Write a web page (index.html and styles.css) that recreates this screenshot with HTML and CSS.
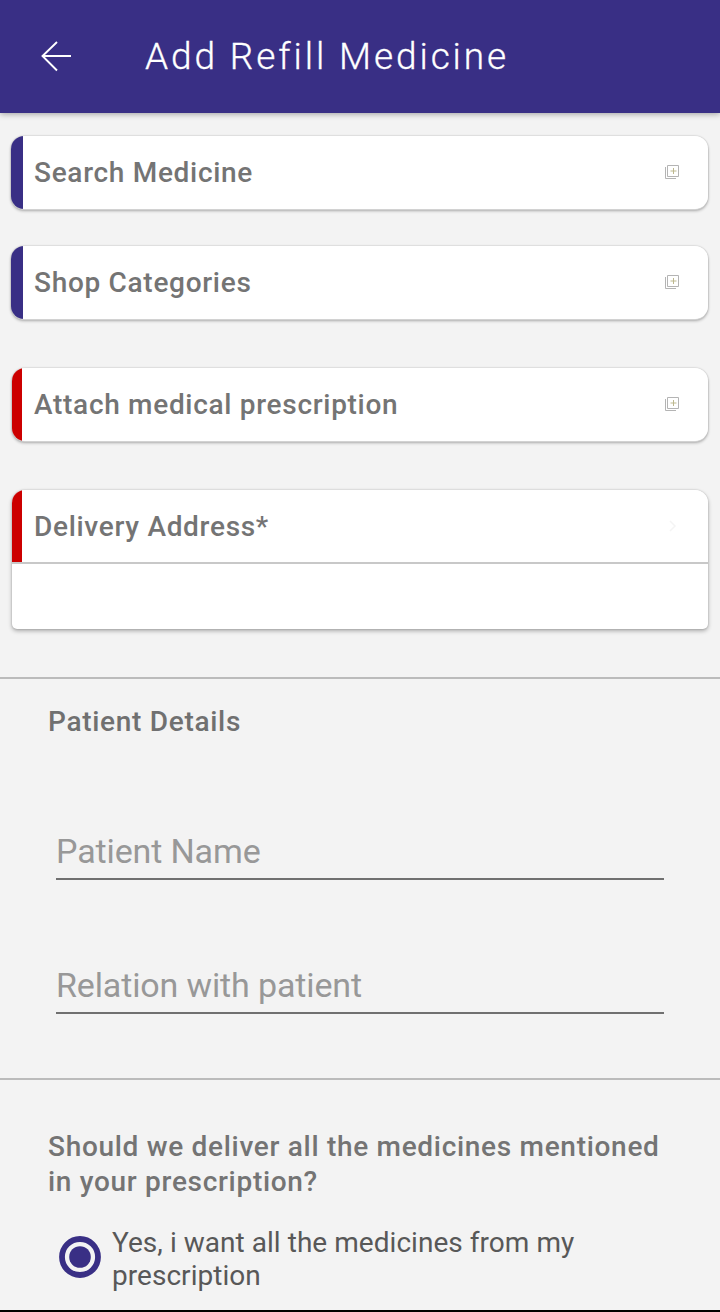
FILE: index.html
```html
<!DOCTYPE html>
<html lang="en">
<head>
    <meta charset="UTF-8">
    <meta name="viewport" content="width=device-width, initial-scale=1.0">
    <title>Add Refill Medicine</title>
    <link rel="stylesheet" href="styles.css">
</head>
<body>
    <header>
        <a href="#" class="back-btn" aria-label="Back">
            <svg width="32" height="32" viewBox="0 0 32 32">
                <path d="M17 1L2.5 15L17 29.5M3 15H31" fill="none" stroke="#fff" stroke-width="1.9"/>
            </svg>
        </a>
        <h1>Add Refill Medicine</h1>
    </header>

    <main>
        <div class="card blue search">
            <span class="card-title">Search Medicine</span>
            <svg class="add-icon" width="16" height="16" viewBox="0 0 16 16">
                <path d="M3.5 1.5H14.5V12.5H3.5ZM1.5 3V14.5H12" fill="none" stroke="#b4b4b4"/>
                <path d="M9.5 4V10M6.5 7H12.5" fill="none" stroke="#bdb88e"/>
            </svg>
        </div>

        <div class="card blue shop">
            <span class="card-title">Shop Categories</span>
            <svg class="add-icon" width="16" height="16" viewBox="0 0 16 16">
                <path d="M3.5 1.5H14.5V12.5H3.5ZM1.5 3V14.5H12" fill="none" stroke="#b4b4b4"/>
                <path d="M9.5 4V10M6.5 7H12.5" fill="none" stroke="#bdb88e"/>
            </svg>
        </div>

        <div class="card red attach">
            <span class="card-title">Attach medical prescription</span>
            <svg class="add-icon" width="16" height="16" viewBox="0 0 16 16">
                <path d="M3.5 1.5H14.5V12.5H3.5ZM1.5 3V14.5H12" fill="none" stroke="#b4b4b4"/>
                <path d="M9.5 4V10M6.5 7H12.5" fill="none" stroke="#bdb88e"/>
            </svg>
        </div>

        <div class="address">
            <div class="card red address-head">
                <span class="card-title">Delivery Address*</span>
                <svg width="16" height="16" viewBox="0 0 16 16">
                    <path d="M6 3L11 8L6 13" fill="none" stroke="#f4f4f4" stroke-width="1.5"/>
                </svg>
            </div>
            <div class="address-body"></div>
        </div>

        <section class="patient">
            <h2>Patient Details</h2>
            <input type="text" class="name" placeholder="Patient Name">
            <input type="text" class="relation" placeholder="Relation with patient">
        </section>

        <section class="delivery">
            <h3>Should we deliver all the medicines mentioned <br>in your prescription?</h3>
            <label class="option">
                <svg class="radio" width="42" height="42" viewBox="0 0 42 42">
                    <circle cx="21" cy="21" r="18" fill="none" stroke="#392f85" stroke-width="5.8"/>
                    <circle cx="21" cy="21" r="10.8" fill="#392f85"/>
                </svg>
                <span class="option-text">Yes, i want all the medicines from my <br>prescription</span>
            </label>
        </section>
    </main>
    <div class="bottom-bar"></div>
</body>
</html>
```

FILE: styles.css
```css
* {
    margin: 0;
    padding: 0;
    box-sizing: border-box;
}

body {
    font-family: Roboto, sans-serif;
    background-color: #f3f3f3;
    height: 1312px;
    display: flex;
    flex-direction: column;
    overflow: hidden;
}

header {
    background-color: #392f85;
    height: 113px;
    flex-shrink: 0;
    padding-left: 40px;
    display: flex;
    align-items: center;
    box-shadow: 0 1px 6px rgba(0, 0, 0, 0.35);
}

.back-btn {
    width: 32px;
    height: 32px;
    margin-right: 73px;
}

h1 {
    font-size: 37px;
    font-weight: 300;
    letter-spacing: 2.9px;
    color: white;
    white-space: nowrap;
    -webkit-text-stroke: 0.3px white;
}

main {
    flex: 1;
}

.card {
    height: 73px;
    margin: 0 12px;
    padding: 0 28px 0 12px;
    display: flex;
    align-items: center;
    justify-content: space-between;
    background-color: white;
    border-radius: 13px;
    box-shadow: 0 1px 0 #d2d2d2, 0 2px 3px rgba(0, 0, 0, 0.3), 0 0 2px rgba(0, 0, 0, 0.25);
}

.card.blue {
    margin-left: 11px;
    background: linear-gradient(to right, #392f85 12px, white 12px);
    padding-left: 23px;
}

.card.red {
    background: linear-gradient(to right, #cc0000 10px, white 10px);
    padding-left: 22px;
}

.search {
    margin-top: 23px;
}

.shop {
    margin-top: 37px;
}

.attach {
    margin-top: 49px;
}

.card-title, h2, h3 {
    font-size: 28px;
    font-weight: 500;
    letter-spacing: 0.7px;
    color: #747474;
}

.add-icon {
    margin-bottom: 2px;
}

.address {
    margin: 49px 12px 0;
    background-color: white;
    border-radius: 13px 13px 5px 5px;
    box-shadow: 0 2px 4px rgba(0, 0, 0, 0.3), 0 0 2px rgba(0, 0, 0, 0.2);
}

.address-head {
    height: 72px;
    margin: 0;
    border-radius: 13px 13px 0 0;
    box-shadow: none;
}

.address-body {
    height: 67px;
    border-top: 2px solid #c8c8c8;
}

.patient {
    margin-top: 48px;
    height: 401px;
    border-top: 2px solid #bbb;
    padding: 26px 56px 0;
}

h2 {
    margin-left: -8px;
    line-height: 34px;
    color: #707070;
}

input {
    display: block;
    width: 100%;
    height: 60px;
    padding-top: 4px;
    border: none;
    border-bottom: 2px solid #707070;
    background: transparent;
    font-family: Roboto, sans-serif;
    font-size: 34px;
    letter-spacing: -0.13px;
    outline: none;
}

input::placeholder {
    color: #989898;
}

.name {
    margin-top: 81px;
}

.relation {
    margin-top: 74px;
}

.delivery {
    border-top: 2px solid #bbb;
    padding: 49px 48px 0;
}

h3 {
    line-height: 35px;
    white-space: nowrap;
}

.option {
    display: flex;
    margin-top: 27px;
    padding-left: 11px;
}

.radio {
    margin: 10px 11px 0 0;
}

.option-text {
    font-size: 28px;
    line-height: 33px;
    letter-spacing: 0.04px;
    color: #585858;
    white-space: nowrap;
}

.bottom-bar {
    height: 2px;
    background-color: black;
}
```
